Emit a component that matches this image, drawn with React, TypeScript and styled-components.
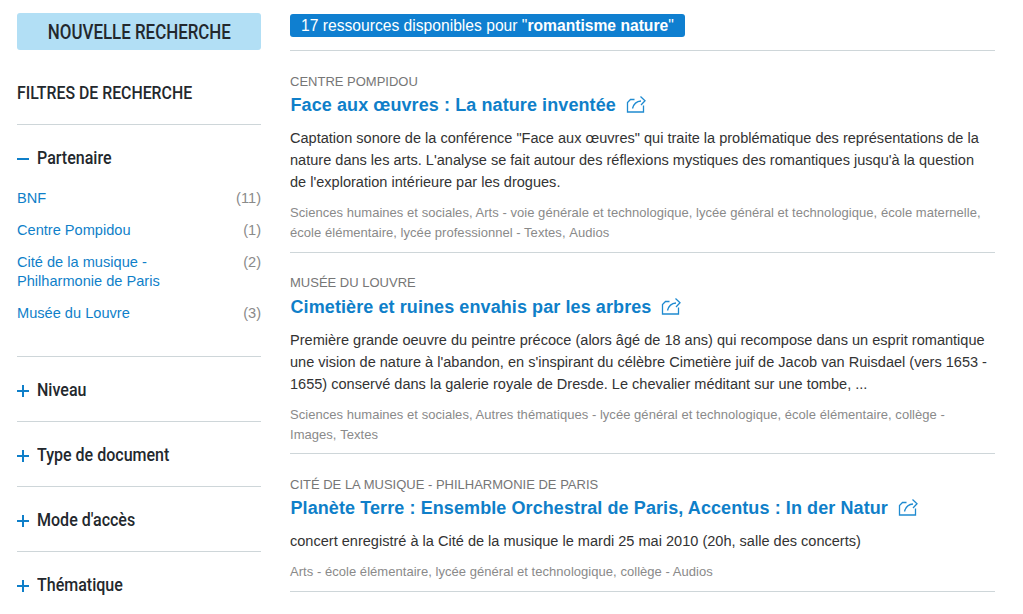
import React from "react";
import styled, { createGlobalStyle } from "styled-components";

const facets = ["Niveau", "Type de document", "Mode d'accès", "Thématique"];

const partners = [
  { name: "BNF", count: 11 },
  { name: "Centre Pompidou", count: 1 },
  { name: "Cité de la musique - Philharmonie de Paris", count: 2 },
  { name: "Musée du Louvre", count: 3 },
];

const results = [
  {
    source: "CENTRE POMPIDOU",
    title: "Face aux œuvres : La nature inventée",
    text: "Captation sonore de la conférence \"Face aux œuvres\" qui traite la problématique des représentations de la nature dans les arts. L'analyse se fait autour des réflexions mystiques des romantiques jusqu'à la question de l'exploration intérieure par les drogues.",
    tags: "Sciences humaines et sociales, Arts - voie générale et technologique, lycée général et technologique, école maternelle, école élémentaire, lycée professionnel - Textes,\u00a0Audios",
  },
  {
    source: "MUSÉE DU LOUVRE",
    title: "Cimetière et ruines envahis par les arbres",
    text: "Première grande oeuvre du peintre précoce (alors âgé de 18 ans) qui recompose dans un esprit romantique une vision de nature à l'abandon, en s'inspirant du célèbre Cimetière juif de Jacob van Ruisdael (vers 1653 - 1655) conservé dans la galerie royale de Dresde. Le chevalier méditant sur une tombe, ...",
    tags: "Sciences humaines et sociales, Autres thématiques - lycée général et technologique, école élémentaire, collège - Images,\u00a0Textes",
  },
  {
    source: "CITÉ DE LA MUSIQUE - PHILHARMONIE DE PARIS",
    title: "Planète Terre : Ensemble Orchestral de Paris, Accentus : In der Natur",
    text: "concert enregistré à la Cité de la musique le mardi 25 mai 2010 (20h, salle des concerts)",
    tags: "Arts - école élémentaire, lycée général et technologique, collège - Audios",
  },
];

function ShareIcon() {
  return (
    <svg width="20" height="20" viewBox="0 0 20 20" fill="none" stroke="#1f8ad0" strokeWidth="1.3">
      <path d="M8.5 4.5H4.5L1.5 7.5V17H17.5V10.5" />
      <path d="M6.5 13.5C7.5 9.5 10.5 6.3 15 6" />
      <path d="M14.5 1.5L19 5.8L15 10" />
    </svg>
  );
}

function SignIcon({ open }: { open?: boolean }) {
  return (
    <SignSvg width="12" height="12" viewBox="0 0 12 12" fill="none" stroke="#0f7fc9" strokeWidth="2">
      <path d="M0 6h12" />
      {!open && <path d="M6 0v12" />}
    </SignSvg>
  );
}

function App() {
  return (
    <Page>
      <GlobalStyle />
      <Sidebar>
        <NewSearch>
          <NewSearchLabel>NOUVELLE RECHERCHE</NewSearchLabel>
        </NewSearch>
        <FiltersTitle>FILTRES DE RECHERCHE</FiltersTitle>
        <Facet $open>
          <FacetHead>
            <SignIcon open />
            <FacetLabel>Partenaire</FacetLabel>
          </FacetHead>
          <PartnerList>
            {partners.map((p) => (
              <PartnerRow key={p.name}>
                <PartnerName>{p.name}</PartnerName>
                <PartnerCount>({p.count})</PartnerCount>
              </PartnerRow>
            ))}
          </PartnerList>
        </Facet>
        {facets.map((f) => (
          <Facet key={f}>
            <FacetHead>
              <SignIcon />
              <FacetLabel>{f}</FacetLabel>
            </FacetHead>
          </Facet>
        ))}
      </Sidebar>
      <Main>
        <CountBar>
          <CountBadge>
            17 ressources disponibles pour "<b>romantisme nature</b>"
          </CountBadge>
        </CountBar>
        {results.map((r) => (
          <Result key={r.title}>
            <Source>{r.source}</Source>
            <Title>
              {r.title}
              <ShareIcon />
            </Title>
            <Description>{r.text}</Description>
            <Tags>{r.tags}</Tags>
          </Result>
        ))}
      </Main>
    </Page>
  );
}

const GlobalStyle = createGlobalStyle`
  html, body {
    margin: 0;
    padding: 0;
    height: 100%;
    overflow: hidden;
    background: #fff;
    font-family: "Liberation Sans", Arial, sans-serif;
  }
`;

const Page = styled("div")`
  display: flex;
  align-items: flex-start;
  gap: 29px;
  padding: 13px 28px 0 17px;
`;

const Sidebar = styled("aside")`
  width: 244px;
  flex: none;
  font-family: Roboto, "Noto Sans", sans-serif;
  color: #23282d;
`;

const NewSearch = styled("div")`
  height: 37px;
  background: #b2dff5;
  border-radius: 3px;
  display: flex;
  align-items: center;
  justify-content: center;
`;

const NewSearchLabel = styled("span")`
  font-size: 20px;
  font-weight: 500;
  white-space: nowrap;
  transform: scaleX(0.845);
`;

const FiltersTitle = styled("div")`
  margin-top: 33px;
  height: 41px;
  font-size: 18px;
  line-height: 20px;
  font-weight: 500;
  white-space: nowrap;
  transform: scaleX(0.88);
  transform-origin: left center;
`;

const Facet = styled("section")<{ $open?: boolean }>`
  border-top: 1px solid #ced6d9;
  padding: ${(p) => (p.$open ? "22px 0 33px" : "22px 0 20px")};
`;

const FacetHead = styled("div")`
  display: flex;
  align-items: center;
  height: 22px;
`;

const SignSvg = styled("svg")`
  flex: none;
  margin: 2px 8px 0 0;
`;

const FacetLabel = styled("span")`
  font-size: 18px;
  line-height: 20px;
  font-weight: 500;
  white-space: nowrap;
  transform: scaleX(0.89);
  transform-origin: left center;
`;

const PartnerList = styled("div")`
  margin-top: 20px;
  display: flex;
  flex-direction: column;
  gap: 13px;
  font-family: "Liberation Sans", Arial, sans-serif;
  font-size: 14.6px;
  line-height: 19px;
`;

const PartnerRow = styled("div")`
  display: flex;
  justify-content: space-between;
  align-items: flex-start;
`;

const PartnerName = styled("span")`
  color: #0f7fc9;
  width: 170px;
`;

const PartnerCount = styled("span")`
  color: #8a8a8a;
`;

const Main = styled("main")`
  flex: 1;
  min-width: 0;
`;

const CountBar = styled("div")`
  padding: 1px 0 13px;
  border-bottom: 1px solid #ced6d9;
`;

const CountBadge = styled("div")`
  display: inline-block;
  background: #0f7fd0;
  color: #fff;
  border-radius: 3px;
  padding: 0 11px;
  font-size: 15.65px;
  line-height: 23px;
`;

const Result = styled("article")`
  padding: 22.5px 0 8.5px;
  border-bottom: 1px solid #ced6d9;
`;

const Source = styled("div")`
  font-size: 13px;
  line-height: 16px;
  color: #767676;
`;

const Title = styled("h2")`
  display: flex;
  align-items: center;
  gap: 10px;
  margin: 2.5px 0 0 0.5px;
  font-size: 18px;
  line-height: 26px;
  font-weight: 700;
  letter-spacing: 0.09px;
  color: #0f7fc9;
`;

const Description = styled("p")`
  margin: 9px 0 0;
  max-width: 700px;
  font-size: 14.55px;
  line-height: 22px;
  color: #333;
`;

const Tags = styled("div")`
  margin-top: 10px;
  font-size: 13px;
  line-height: 20px;
  letter-spacing: 0.04px;
  color: #8a8a8a;
`;

export default App;
